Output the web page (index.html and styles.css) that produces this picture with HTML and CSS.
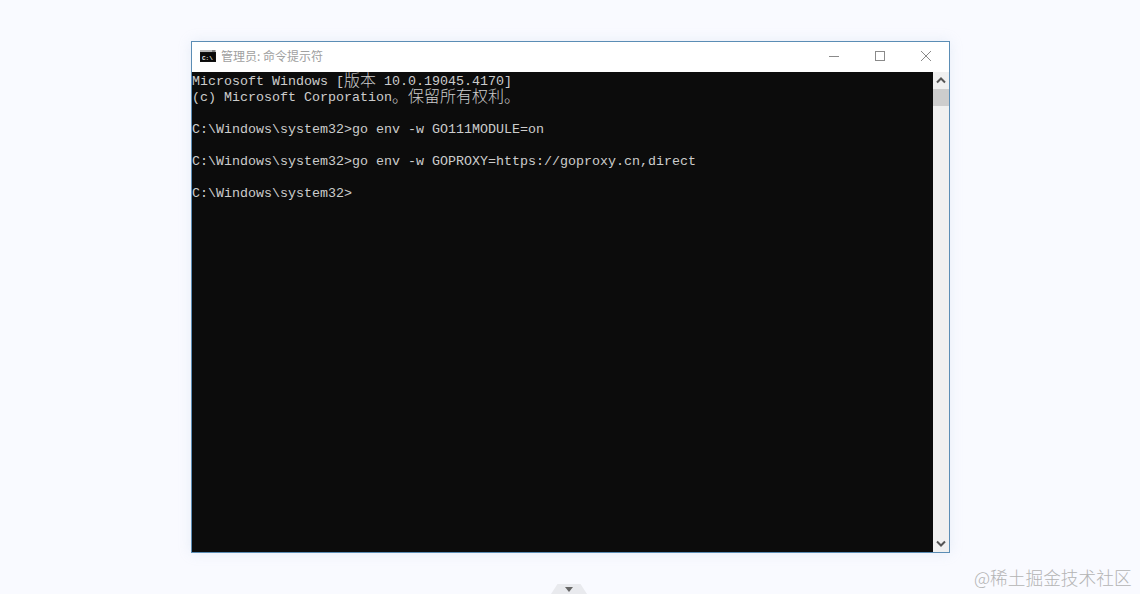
FILE: index.html
```html
<!DOCTYPE html>
<html lang="zh">
<head>
<meta charset="utf-8">
<title>命令提示符</title>
<link rel="stylesheet" href="styles.css">
</head>
<body>
<main class="window">
  <header class="titlebar">
    <svg class="app-icon" width="16" height="12" viewBox="0 0 16 12">
      <rect width="16" height="12" fill="#111"/>
      <rect x="0" y="0" width="16" height="2" fill="#b9b9b9"/>
      <rect x="12" y="0.5" width="3" height="1" fill="#444"/>
      <rect x="1" y="3" width="14" height="8" fill="#0a0a0a"/>
      <text x="2" y="9.6" class="app-icon-text">C:\</text>
    </svg>
    <span class="title">管理员: 命令提示符</span>
    <div class="controls">
      <svg class="ctl" width="12" height="12" viewBox="0 0 12 12"><path d="M1 6.5H11" stroke="#8a8a8a" fill="none"/></svg>
      <svg class="ctl" width="12" height="12" viewBox="0 0 12 12"><rect x="1.5" y="1.5" width="9" height="9" stroke="#8a8a8a" fill="none"/></svg>
      <svg class="ctl" width="12" height="12" viewBox="0 0 12 12"><path d="M1 1L11 11M11 1L1 11" stroke="#8a8a8a" fill="none"/></svg>
    </div>
  </header>
  <div class="body">
    <div class="console">
      <div class="line">Microsoft Windows [<span class="cjk">版本</span> 10.0.19045.4170]</div>
      <div class="line">(c) Microsoft Corporation<span class="cjk">。保留所有权利。</span></div>
      <div class="line"></div>
      <div class="line">C:\Windows\system32&gt;go env -w GO111MODULE=on</div>
      <div class="line"></div>
      <div class="line">C:\Windows\system32&gt;go env -w GOPROXY=https://goproxy.cn,direct</div>
      <div class="line"></div>
      <div class="line">C:\Windows\system32&gt;</div>
    </div>
    <aside class="scrollbar">
      <svg class="arrow" width="16" height="17" viewBox="0 0 16 17"><path d="M4 10.5L8 6.5L12 10.5" stroke="#555" stroke-width="2" fill="none"/></svg>
      <div class="thumb"></div>
      <div class="track"></div>
      <svg class="arrow" width="16" height="17" viewBox="0 0 16 17"><path d="M4 6.5L8 10.5L12 6.5" stroke="#555" stroke-width="2" fill="none"/></svg>
    </aside>
  </div>
</main>
<div class="handle"><span class="handle-arrow"></span></div>
<div class="watermark">@稀土掘金技术社区</div>
</body>
</html>
```
FILE: styles.css
```css
html, body {
  margin: 0;
  height: 100%;
}
body {
  background: #f9faff;
  padding-top: 41px;
  box-sizing: border-box;
  overflow: hidden;
  font-family: "Noto Sans CJK SC", sans-serif;
}
.window {
  width: 757px;
  height: 510px;
  margin-left: 191px;
  border: 1px solid #5b8db5;
  background: #fff;
  display: flex;
  flex-direction: column;
  box-shadow: 0 0 12px rgba(170, 190, 220, 0.22);
}
.titlebar {
  height: 30px;
  display: flex;
  align-items: center;
  padding-left: 8px;
  flex: none;
}
.app-icon {
  flex: none;
  margin-right: 5px;
  margin-top: -2px;
}
.app-icon-text {
  font: bold 6px "Liberation Mono", monospace;
  fill: #eee;
}
.title {
  font-size: 12px;
  line-height: 16px;
  color: #a0a0a0;
  margin-top: -2px;
}
.controls {
  margin-left: auto;
  display: flex;
  gap: 34px;
  padding-right: 17px;
  margin-top: -2px;
}
.ctl {
  display: block;
}
.body {
  flex: 1;
  display: flex;
  min-height: 0;
}
.console {
  flex: 1;
  background: #0c0c0c;
  color: #cccccc;
  font: 13.33px/16px "Liberation Mono", "Noto Sans CJK SC", monospace;
  overflow: hidden;
  padding-top: 2px;
}
.line {
  height: 16px;
  white-space: pre;
}
.cjk {
  font: 300 16px/0 "Noto Sans CJK SC", sans-serif;
  vertical-align: -1px;
}
.scrollbar {
  width: 16px;
  flex: none;
  background: #f0f0f0;
  display: flex;
  flex-direction: column;
}
.arrow {
  display: block;
  flex: none;
}
.thumb {
  height: 17px;
  background: #cdcdcd;
  flex: none;
}
.track {
  flex: 1;
}
.handle {
  position: absolute;
  left: 551px;
  top: 584px;
  width: 36px;
  height: 10px;
  background: #e9eaee;
  clip-path: polygon(18% 0, 82% 0, 100% 100%, 0 100%);
}
.handle-arrow {
  position: absolute;
  left: 14px;
  top: 3px;
  border-left: 4px solid transparent;
  border-right: 4px solid transparent;
  border-top: 5px solid #666;
}
.watermark {
  position: absolute;
  left: 974px;
  top: 564px;
  font-size: 17.7px;
  font-weight: 300;
  line-height: 26px;
  color: #b4b4b4;
  white-space: nowrap;
}
```
